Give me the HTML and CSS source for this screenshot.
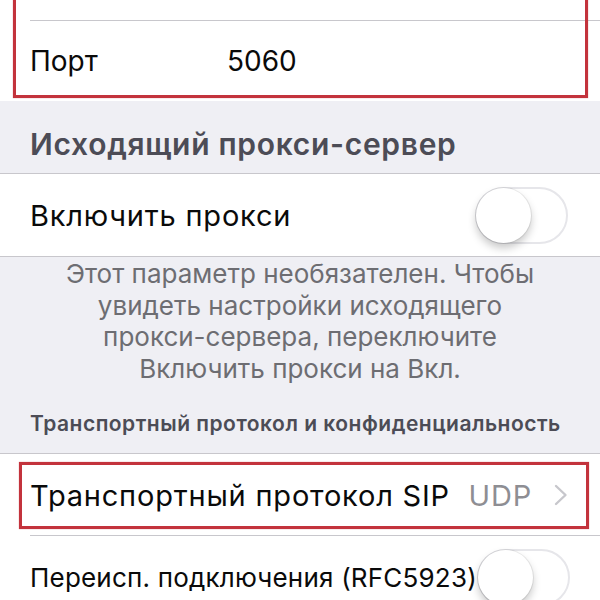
FILE: index.html
```html
<!DOCTYPE html>
<html lang="ru">
<head>
<meta charset="utf-8">
<link rel="stylesheet" href="styles.css">
</head>
<body>
<div class="page">
  <div class="group top">
    <div class="row stub"></div>
    <div class="row port">
      <span class="label">Порт</span>
      <span class="value">5060</span>
    </div>
  </div>

  <div class="header big">Исходящий прокси-сервер</div>

  <div class="group bordered">
    <div class="row">
      <span class="label">Включить прокси</span>
      <span class="switch"><span class="knob"></span></span>
    </div>
  </div>

  <div class="footnote">Этот параметр необязателен. Чтобы<br>увидеть настройки исходящего<br>прокси-сервера, переключите<br>Включить прокси на Вкл.</div>

  <div class="header small">Транспортный протокол и конфиденциальность</div>

  <div class="group bordered">
    <div class="row sep">
      <span class="label">Транспортный протокол SIP</span>
      <span class="detail">UDP</span>
      <svg class="chev" width="14" height="22" viewBox="0 0 14 22"><polyline points="2,2 11.5,11 2,20" fill="none" stroke="#c7c7cc" stroke-width="2.4" stroke-linecap="round" stroke-linejoin="round"/></svg>
    </div>
    <div class="row">
      <span class="label smaller">Переисп. подключения (RFC5923)</span>
      <span class="switch"><span class="knob"></span></span>
    </div>
  </div>

  <div class="mark mark-top"></div>
  <div class="mark mark-sip"></div>
</div>
</body>
</html>
```

FILE: styles.css
```css
* { box-sizing: border-box; }
html, body { margin: 0; padding: 0; }
body {
  background: #efeff4;
  font-family: "Inter", "Liberation Sans", Arial, sans-serif;
  color: #0a0a0a;
}
.page {
  position: relative;
  width: 600px;
  height: 600px;
  overflow: hidden;
}
.group {
  background: #fff;
}
.group.bordered {
  border-top: 1px solid #c8c7cc;
  border-bottom: 1px solid #c8c7cc;
}
.row {
  position: relative;
  display: flex;
  align-items: center;
  height: 82px;
  padding: 0 32px 0 30px;
}
.row.stub {
  height: 21px;
}
.row.stub::after, .row.sep::after {
  content: "";
  position: absolute;
  left: 30px;
  right: 0;
  bottom: 0;
  height: 1px;
  background: #c8c7cc;
}
.row.port {
  height: 80px;
}
.label {
  font-size: 29px;
  letter-spacing: 0.8px;
  flex: 1;
  white-space: nowrap;
}
.port .label {
  flex: 0 0 197px;
  font-size: 28px;
  letter-spacing: 0;
}
.value {
  font-size: 28px;
}
.label.smaller {
  font-size: 26px;
  letter-spacing: 0.2px;
}
.header {
  color: #4c4c56;
  font-weight: 600;
  padding-left: 30px;
  white-space: nowrap;
}
.header.big {
  height: 72px;
  font-size: 30px;
  letter-spacing: 0.7px;
  padding-top: 25px;
}
.header.small {
  font-size: 21px;
  letter-spacing: 0.5px;
  height: 69px;
  padding-top: 27px;
}
.footnote {
  color: #6d6d72;
  font-size: 26px;
  line-height: 31.5px;
  text-align: center;
  padding-top: 1px;
}
.detail {
  color: #8e8e93;
  font-size: 29px;
  letter-spacing: 0.8px;
  margin-right: 22px;
}
.chev {
  display: block;
}
.switch {
  position: relative;
  width: 93px;
  height: 57px;
  border-radius: 29px;
  border: 2px solid #e6e6ea;
  background: #fff;
  flex: none;
}
.knob {
  position: absolute;
  left: -1px;
  top: -1px;
  width: 55px;
  height: 55px;
  border-radius: 50%;
  background: #fff;
  box-shadow: 0 0 0 1px rgba(0,0,0,0.07), 0 5px 9px rgba(0,0,0,0.22);
}
.mark {
  position: absolute;
  border: 3px solid #c3333c;
  box-shadow: 0 0 1px rgba(195,51,60,0.6);
}
.mark-top {
  left: 13px;
  top: -10px;
  width: 575px;
  height: 108px;
}
.mark-sip {
  left: 19px;
  top: 462px;
  width: 570px;
  height: 67px;
}
```
